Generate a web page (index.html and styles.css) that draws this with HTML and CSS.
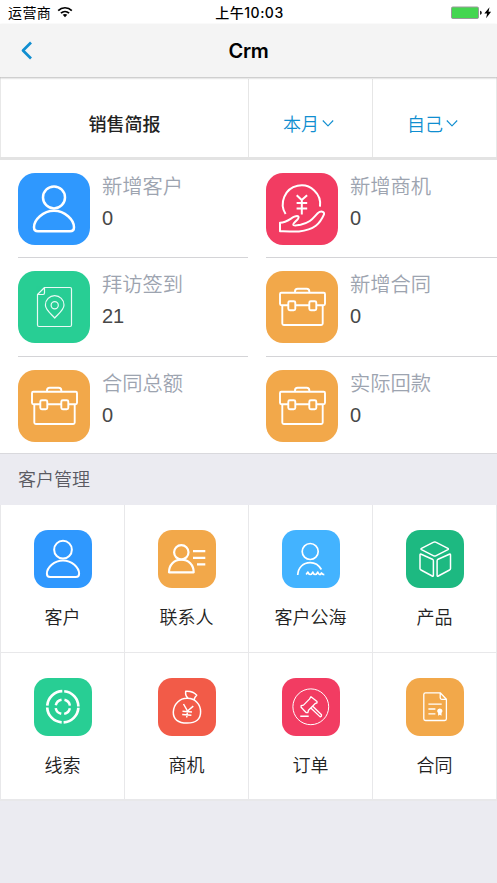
FILE: index.html
```html
<!DOCTYPE html>
<html lang="zh-CN">
<head>
<meta charset="utf-8">
<title>Crm</title>
<link rel="stylesheet" href="styles.css">
</head>
<body>
<svg class="defs" aria-hidden="true">
  <symbol id="person" viewBox="0 0 72 72"><g stroke-width="2.500"><circle cx="36" cy="24.4" r="11"/><path d="M36 37.8c-11 0-20 9-20 16.500 0 2.600 1.600 4 4 4h32c2.400 0 4-1.400 4-4 0-7.500-9-16.500-20-16.500z"/></g></symbol>
  <symbol id="case" viewBox="0 0 72 72"><g stroke-width="1.900"><path d="M22 34.300h-6.500c-1 0-1.500-.500-1.500-1.500V23c0-.800.500-1.300 1.300-1.300h42.400c.8 0 1.300.500 1.300 1.300v9.800c0 1-.5 1.500-1.500 1.500h-7.200M29.300 34.300h14M16.300 34.300v18.200c0 1 .6 1.500 1.500 1.500h37.400c.9 0 1.500-.5 1.500-1.500V34.300M29 21.500v-1.200c0-1.700 1-2.600 2.600-2.600h9.100c1.600 0 2.600.9 2.600 2.600v1.200"/><rect x="22.300" y="30.200" width="7" height="9" rx="1.500"/><rect x="43.300" y="30.200" width="7" height="9" rx="1.500"/></g></symbol>
</svg>
<div class="status">
  <div class="carrier">运营商
    <svg width="16" height="12" viewBox="0 0 16 12"><path d="M1.200 4.600C5 .8 11 .8 14.800 4.600M3.900 7.200c2.400-2.300 5.800-2.300 8.200 0" stroke="#000" stroke-width="1.700"/><path d="M5.700 8.800c1.400-1.200 3.200-1.200 4.600 0L8 11.300z" fill="#000"/></svg>
  </div>
  <div class="time">上午10:03</div>
  <svg class="battery" width="42" height="14" viewBox="0 0 42 14"><rect x=".5" y="1" width="27" height="11.500" rx="1.300" fill="#44d650" stroke="#999" /><path d="M29 4.800c1.300.400 1.800 1 1.800 2s-.5 1.700-1.800 2z" fill="#222"/><path d="M38.500 1.200l-5.200 6.400h2.800l-1 4.700 5-6.500h-2.600z" fill="#000"/></svg>
</div>
<header class="nav">
  <svg width="13" height="20" viewBox="0 0 13 20"><path d="M11 1.500L3 9.500l8 8" stroke="#108ed0" stroke-width="2.700"/></svg>
  <h1>Crm</h1>
</header>
<section class="filters">
  <div class="report">销售简报</div>
  <div class="pick">本月<svg width="12" height="8" viewBox="0 0 12 8"><path d="M.8 1.500L6 6.800 11.200 1.500" stroke="#108ed0" stroke-width="1.100"/></svg></div>
  <div class="pick">自己<svg width="12" height="8" viewBox="0 0 12 8"><path d="M.8 1.500L6 6.800 11.200 1.500" stroke="#108ed0" stroke-width="1.100"/></svg></div>
</section>
<section class="stats">
  <div class="stat"><svg class="icon blue"><use href="#person"/></svg><div><p>新增客户</p><b>0</b></div></div>
  <div class="stat"><svg class="icon red" viewBox="0 0 72 72"><g stroke-width="2"><path d="M19.600 41A18.700 18.700 0 1 1 54 33.700M30.700 22.300l5 4.700 5.400-4.700M35.800 27v14.500M30.600 30h10.600M30.600 35.400h10.600"/><path d="M14 49.700v8.600c7-.3 13 .5 19 .1 15.500-1.400 21-7.800 25-17 .8-3-3.200-3.800-6.300-1.200C47 45 45 49.500 34.500 51.700c-4 .7-7 1.500-7.300.1-.3-1.600 3.500-3.800 5-6.400 1.300-2.600-1-3-3.800-1.700-4.400 2-7.400 5.700-14.400 6z"/></g></svg><div><p>新增商机</p><b>0</b></div></div>
  <div class="stat"><svg class="icon green" viewBox="0 0 72 72"><g stroke-width="1.200" opacity=".9"><path d="M26.500 16.500H52c1 0 1.500.5 1.500 1.500v36c0 1-.5 1.500-1.500 1.500H21c-1 0-1.500-.5-1.500-1.500V23.500zM26.500 16.500v5.600c0 .9-.5 1.400-1.400 1.400h-5.600"/><path d="M36.700 47c-3-3.600-9.300-8-9.300-13a9.300 9.300 0 0 1 18.600 0c0 5-6.300 9.400-9.300 13z"/><circle cx="36.700" cy="34.200" r="3.600"/></g></svg><div><p>拜访签到</p><b>21</b></div></div>
  <div class="stat"><svg class="icon orange"><use href="#case"/></svg><div><p>新增合同</p><b>0</b></div></div>
  <div class="stat"><svg class="icon orange"><use href="#case"/></svg><div><p>合同总额</p><b>0</b></div></div>
  <div class="stat"><svg class="icon orange"><use href="#case"/></svg><div><p>实际回款</p><b>0</b></div></div>
</section>
<h2>客户管理</h2>
<section class="apps">
  <div class="app"><svg class="icon blue"><use href="#person"/></svg><span>客户</span></div>
  <div class="app"><svg class="icon orange" viewBox="0 0 58 58"><g stroke-width="2.200"><circle cx="23.300" cy="22.300" r="7.200"/><path d="M23.300 29.700c-7.300 0-12.300 5.300-12.300 12.600h24.700c0-7.300-5-12.600-12.400-12.600zM35 21.200h12.300M35 27.800h12.300M39 34.300h8.300"/></g></svg><span>联系人</span></div>
  <div class="app"><svg class="icon sky" viewBox="0 0 58 58"><g stroke-width="1.700"><circle cx="28.200" cy="21.500" r="8"/><path d="M15.700 45c.4-7.500 5.500-12.400 12.500-12.400 5 0 8.700 2.600 11.200 6.900M24.200 44.500l1.700-2.400c1.200 3.200 3.600 3.200 4.900 0 1.200 3.200 3.600 3.200 4.900 0 1.400 2.900 2.600 3.200 3.800.9.800 1.300 1.600 1.700 2.800 1.700"/></g></svg><span>客户公海</span></div>
  <div class="app"><svg class="icon emerald" viewBox="0 0 58 58"><g stroke-width="1.500"><path d="M27.700 12.200q1-.6 2 0l12.200 6.200q1 .6 0 1.200l-12.200 6.200q-1 .5-2 0l-12.200-6.200q-1-.6 0-1.200zM15.200 24.200l11.200 5q1 .5 1 1.500v14.500q0 1.400-1.200.8l-11.200-6q-1-.5-1-1.500V25q0-1.200 1.200-.8zM43.300 24.200l-11.200 5q-1 .5-1 1.500v14.500q0 1.400 1.200.8l11.200-6q1-.5 1-1.500V25q0-1.200-1.200-.8z"/></g></svg><span>产品</span></div>
  <div class="app"><svg class="icon green" viewBox="0 0 58 58"><circle cx="28.800" cy="28.800" r="15.600" stroke-width="2.700" stroke-dasharray="22.500 2.004" stroke-dashoffset="-1"/><circle cx="28.800" cy="28.800" r="7.200" stroke-width="2.500" stroke-dasharray="8.310 3" stroke-dashoffset="-1.500"/></svg><span>线索</span></div>
  <div class="app"><svg class="icon coral" viewBox="0 0 58 58"><g stroke-width="1.500"><path d="M29.500 20.300C22 20 15.700 25.800 15.300 34c-.2 7.500 5 11 13.700 11 8.800 0 13.800-3.500 13.600-11.500C42.500 26 37 20.500 29.500 20.300zM30.300 20.300c-2.500-1.800-3-4-2.600-7 4.500-.3 8 .3 11 4-1.600 1.400-2.300 2.800-2.900 4.900M25.500 26l4 7 5.800-4.800M29.500 33l-.8 6.500M24.500 33.300l9.500.8M24.200 36.400l9.200.8"/></g></svg><span>商机</span></div>
  <div class="app"><svg class="icon red" viewBox="0 0 58 58"><circle cx="28.800" cy="28.800" r="17.900" stroke-width="1"/><path stroke-width="1.300" d="M29 18.700l6 4.700v1.500l-2 .8-6.500 6.500-.7 2.500h-1.500l-5.200-5.500v-1.500l2.400-.6 5.900-6zM30.800 28.200l8.700 8.500-.1 1.400-1.200.8-9.100-8.600"/><path stroke-width="1.500" d="M18.300 38.300h8.400"/></svg><span>订单</span></div>
  <div class="app"><svg class="icon orange" viewBox="0 0 58 58"><g stroke-width="1.300"><path d="M34.200 14.800H19.500q-1.700 0-1.700 1.700v24.300q0 1.700 1.700 1.700h19.200q1.700 0 1.700-1.700V21.300zM34.200 14.800v5q0 1.500 1.500 1.500h4.700M22.400 26.200h13.300M22.400 31h7M22.400 35.800h7"/></g><path fill="#fff" stroke="none" d="M33.800 30.400a2.600 2.600 0 0 1 1.700 4.600v2.700l-1.700-1-1.700 1V35a2.600 2.600 0 0 1 1.700-4.600z"/></svg><span>合同</span></div>
</section>
</body>
</html>
```
FILE: styles.css
```css
* { box-sizing: border-box; margin: 0; }
body {
  height: 883px;
  overflow: hidden;
  background: #ebebf1;
  color: #222;
  font-family: "Liberation Sans", "Noto Sans CJK SC", sans-serif;
}
svg { fill: none; stroke-linejoin: round; display: block; flex: none; }
.defs { width: 0; height: 0; position: absolute; }
.status {
  height: 24px;
  background: #fff;
  color: #000;
  display: grid;
  grid-template-columns: 1fr auto 1fr;
  align-items: center;
  padding: 1px 4px 0 8px;
  font: 500 14px/22px Inter, "Noto Sans CJK SC", sans-serif;
}
.carrier { display: flex; gap: 6px; align-items: center; font-weight: 400; letter-spacing: .4px; }
.carrier svg { margin-bottom: 2px; }
.time { letter-spacing: .5px; margin-right: 2px; }
.battery { justify-self: end; }
.nav {
  height: 53px;
  background: #f4f4f4;
  display: grid;
  grid-template-columns: 1fr auto 1fr;
  align-items: center;
  padding: 0 20px;
  box-shadow: 0 1px 2px rgba(0, 0, 0, .28);
  position: relative;
}
h1 { font: 600 20px/24px Inter, sans-serif; letter-spacing: -.3px; color: #000; }
.filters {
  height: 83px;
  padding: 2px 1px 0;
  display: grid;
  grid-template-columns: 247px 124px 1fr;
  border-bottom: 3px solid #e3e3e3;
  background: #fff;
  box-shadow: inset 1px 0 #e8e8e8, inset -1px 0 #e8e8e8;
}
.filters > div {
  display: flex;
  align-items: center;
  justify-content: center;
  font-size: 18px;
  padding-top: 9px;
}
.report { font-weight: 500; }
.pick { border-left: 1px solid #e6e6e6; color: #108ed0; font-weight: 350; gap: 3px; }
.filters > .pick { padding-right: 4px; }
.stats {
  height: 294px;
  display: grid;
  grid-template-columns: 248px 249px;
  grid-template-rows: 98px 98.500px 97px;
  background: #fff;
  border-bottom: 1px solid #d9d9dd;
}
.stat { margin-left: 18px; display: flex; gap: 12px; padding-top: 13px; border-bottom: 1px solid #d4d4d7; }
.stat:nth-child(n+5) { border: 0; }
.stat p { font-size: 20.300px; line-height: 28px; font-weight: 350; color: #9da4b0; }
.stat b { display: block; font-size: 20px; line-height: 24px; font-weight: 400; color: #484848; margin-top: 5px; }
.icon { width: 72px; height: 72px; border-radius: 17px; stroke: #fff; }
.blue { background: #2f98fe; }
.red { background: #f23c62; }
.green { background: #28ce94; }
.orange { background: #f2a84a; }
.sky { background: #43b3ff; }
.emerald { background: #1db981; }
.coral { background: #f25b48; }
h2 { height: 51px; padding: 1px 0 0 18px; font-size: 18px; line-height: 51px; font-weight: 350; color: #5a5a62; }
.apps {
  height: 296px;
  display: grid;
  grid-template-columns: 123px 123px 123px 123px;
  grid-template-rows: 147px 146px;
  gap: 1px;
  padding: 0 1px 2px;
  background: #e8e8ea;
}
.app { background: #fff; display: flex; flex-direction: column; align-items: center; padding-top: 25px; font-size: 18px; line-height: 26px; font-weight: 350; gap: 17px; }
.app .icon { width: 58px; height: 58px; border-radius: 14px; }
```
